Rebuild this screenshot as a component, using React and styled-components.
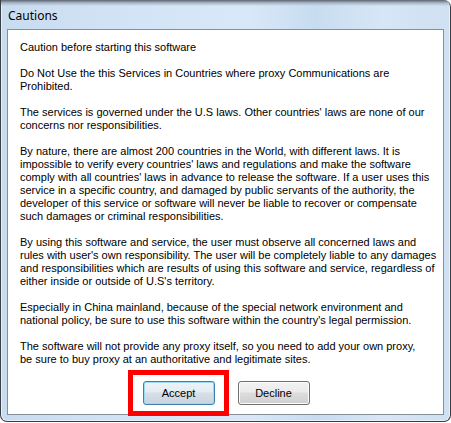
import React from 'react';
import styled, { createGlobalStyle } from 'styled-components';

const GlobalStyle = createGlobalStyle`
  html, body {
    margin: 0;
    padding: 0;
    background: #ffffff;
  }
`;

const paragraphs = [
  ['Caution before starting this software'],
  [
    'Do Not Use the this Services in Countries where proxy Communications are',
    'Prohibited.',
  ],
  [
    "The services is governed under the U.S laws. Other countries' laws are none of our",
    'concerns nor responsibilities.',
  ],
  [
    'By nature, there are almost 200 countries in the World, with different laws. It is',
    "impossible to verify every countries' laws and regulations and make the software",
    "comply with all countries' laws in advance to release the software. If a user uses this",
    'service in a specific country, and damaged by public servants of the authority, the',
    'developer of this service or software will never be liable to recover or compensate',
    'such damages or criminal responsibilities.',
  ],
  [
    'By using this software and service, the user must observe all concerned laws and',
    "rules with user's own responsibility. The user will be completely liable to any damages",
    'and responsibilities which are results of using this software and service, regardless of',
    "either inside or outside of U.S's territory.",
  ],
  [
    'Especially in China mainland, because of the special network environment and',
    "national policy, be sure to use this software within the country's legal permission.",
  ],
  [
    'The software will not provide any proxy itself, so you need to add your own proxy,',
    'be sure to buy proxy at an authoritative and legitimate sites.',
  ],
];

function App() {
  return (
    <>
      <GlobalStyle />
      <Window>
        <TitleBar>Cautions</TitleBar>
        <Panel>
          <Body>
            {paragraphs.map((lines, i) => (
              <Paragraph key={i}>
                {lines.map((line, j) => (
                  <React.Fragment key={j}>
                    {line}
                    {j < lines.length - 1 && <br />}
                  </React.Fragment>
                ))}
              </Paragraph>
            ))}
          </Body>
          <ButtonRow>
            <Highlighted>
              <Button $default>Accept</Button>
              <RedBox />
            </Highlighted>
            <Button>Decline</Button>
          </ButtonRow>
        </Panel>
      </Window>
    </>
  );
}

const Window = styled.div`
  box-sizing: border-box;
  width: 451px;
  height: 422px;
  display: flex;
  flex-direction: column;
  border: 1px solid #3a3f46;
  border-top: none;
  border-radius: 0 7px 7px 7px;
  background: linear-gradient(
    90deg,
    #c9dbef 0%,
    #d3e4f6 30%,
    #d9e8f8 55%,
    #c8dcf0 70%,
    #d7e6f6 85%,
    #cfe0f2 100%
  );
  box-shadow: inset 1px 0 0 #e6f0fb, inset -1px 0 0 #e6f0fb, inset 0 -1px 0 #e6f0fb;
  overflow: hidden;
`;

const TitleBar = styled.div`
  height: 29px;
  flex: none;
  box-sizing: border-box;
  padding: 8px 0 0 7px;
  font-family: 'Noto Sans', 'Open Sans', sans-serif;
  font-size: 12px;
  line-height: 15px;
  color: #000;
  background: linear-gradient(180deg, #5c6470 0px, #a9b8c8 3px, rgba(0, 0, 0, 0) 6px);
`;

const Panel = styled.div`
  box-sizing: border-box;
  height: 386px;
  margin: 0 6px;
  display: flex;
  flex-direction: column;
  background: #ffffff;
  border: 1px solid #858f9c;
`;

const Body = styled.div`
  flex: 1;
  padding: 11px 0 0 12px;
  font-family: 'Liberation Sans', Arial, sans-serif;
  font-size: 11px;
  line-height: 13px;
  color: #000;
`;

const Paragraph = styled.p`
  margin: 0 0 13px;
  white-space: nowrap;
`;

const ButtonRow = styled.div`
  display: flex;
  justify-content: center;
  gap: 23px;
  padding: 0 0 9px 1px;
`;

const Highlighted = styled.div`
  position: relative;
  display: flex;
`;

const RedBox = styled.div`
  position: absolute;
  left: -15px;
  top: -11px;
  right: -14px;
  bottom: -11px;
  border: 5px solid #ff0000;
  pointer-events: none;
`;

const Button = styled.button`
  box-sizing: border-box;
  width: 72px;
  height: 24px;
  padding: 0;
  font-family: 'Liberation Sans', Arial, sans-serif;
  font-size: 11px;
  color: #000;
  border-radius: 3px;
  border: 1px solid ${(p) => (p.$default ? '#3c7fb1' : '#707070')};
  background: ${(p) =>
    p.$default
      ? 'linear-gradient(180deg, #eef4f8 0%, #e4ecf2 45%, #d6e0e8 50%, #c8d4de 100%)'
      : 'linear-gradient(180deg, #f2f2f2 0%, #ebebeb 45%, #dddddd 50%, #cfcfcf 100%)'};
  box-shadow: inset 0 0 0 1px ${(p) => (p.$default ? '#9fdaf5' : '#fcfcfc')};
`;

export default App;
